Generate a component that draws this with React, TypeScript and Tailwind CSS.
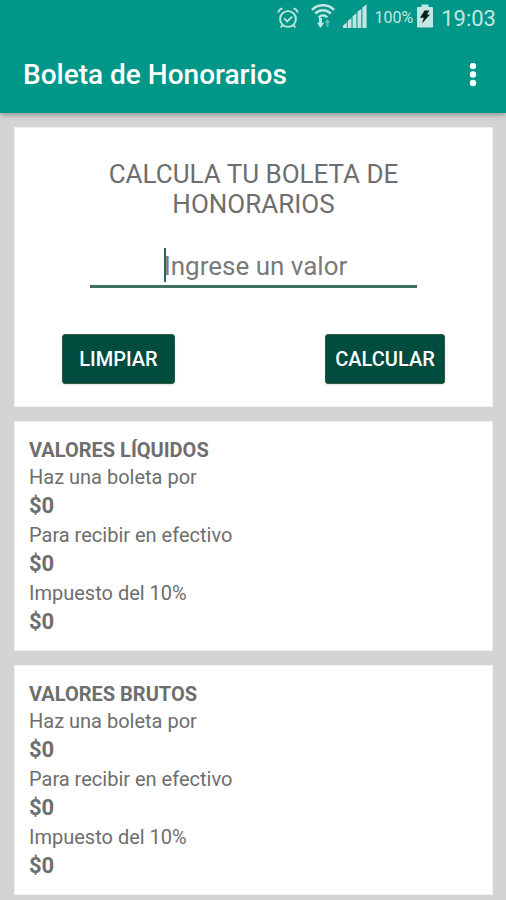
import { useState } from "react";

const TAX_RATE = 0.1;

interface Totals {
  boleta: number;
  efectivo: number;
  impuesto: number;
}

const EMPTY: Totals = { boleta: 0, efectivo: 0, impuesto: 0 };

function money(value: number) {
  return `$${Math.round(value)}`;
}

function AlarmIcon() {
  return (
    <svg width="22" height="22" viewBox="0 0 22 22" fill="none" stroke="currentColor" strokeWidth="1.9">
      <circle cx="11" cy="12" r="7.9" />
      <path d="M7.2 11.4l3 3 5-4.8" />
      <path d="M1.3 5.6C1.6 3.4 3.2 1.900 5.600 1.400M20.700 5.600c-.3-2.200-1.900-3.700-4.300-4.200M5.400 18l-1.600 2.600M16.600 18l1.600 2.600" />
    </svg>
  );
}

function WifiIcon() {
  return (
    <svg width="24" height="24" viewBox="0 0 24 24" fill="none" stroke="currentColor" strokeWidth="2.500">
      <path d="M.9 6C6.800-.3 17.200-.3 23.100 6M4.300 9.700c4.300-4.500 11.100-4.500 15.400 0M7.700 13.300c2.500-2.400 6.100-2.400 8.600 0" />
      <path d="M9.500 14v6.500" strokeWidth="3" />
      <path d="M5.800 18.800h7.400L9.500 24z" fill="currentColor" stroke="none" />
      <path d="M16.500 23v-5" strokeWidth="2" opacity="0.5" />
      <path d="M13.900 18.600h5.200L16.500 15z" fill="currentColor" stroke="none" opacity="0.5" />
    </svg>
  );
}

function SignalIcon() {
  return (
    <svg width="24" height="24" viewBox="0 0 24 24" fill="currentColor">
      <path d="M0 24v-2.500l3.800-3V24zM4.700 24v-7l3.800-3v10zM9.600 24V12.300l3.800-3V24zM14.500 24V7.800l3.800-2.900V24zM19.400 24V3.600L23.600.2V24z" />
    </svg>
  );
}

function BatteryIcon() {
  return (
    <svg width="16" height="24" viewBox="0 0 16 24">
      <path d="M4.500 0.500h7V3H15a1 1 0 0 1 1 1v18.500a1 1 0 0 1-1 1H1a1 1 0 0 1-1-1V4a1 1 0 0 1 1-1h3.500z" fill="currentColor" />
      <path d="M7.500 6.500h5l-2.500 4h3L5 19.500l1.800-5.800H3z" fill="#06201c" />
    </svg>
  );
}

function StatusBar() {
  return (
    <div className="flex h-9 items-center justify-end pr-[10px] text-[#c2e7e2]">
      <AlarmIcon />
      <span className="mb-1 ml-3"><WifiIcon /></span>
      <span className="mb-1 ml-2"><SignalIcon /></span>
      <span className="ml-2 text-base">100%</span>
      <span className="mb-1 ml-1"><BatteryIcon /></span>
      <span className="ml-2 text-[22px]">19:03</span>
    </div>
  );
}

function ResultCard({ title, totals }: { title: string; totals: Totals }) {
  const rows = [
    { label: "Haz una boleta por", value: totals.boleta },
    { label: "Para recibir en efectivo", value: totals.efectivo },
    { label: "Impuesto del 10%", value: totals.impuesto },
  ];

  return (
    <section className="border border-[#f0f0f0] bg-white px-[14px] pt-[15px] pb-[13px]">
      <h2 className="text-xl leading-[26px] font-bold">{title}</h2>
      <dl>
        {rows.map((row) => (
          <div key={row.label}>
            <dt className="text-xl leading-7">{row.label}</dt>
            <dd className="text-[22px] leading-[30px] font-bold">{money(row.value)}</dd>
          </div>
        ))}
      </dl>
    </section>
  );
}

export default function App() {
  const [amount, setAmount] = useState("");
  const [liquid, setLiquid] = useState<Totals>(EMPTY);
  const [gross, setGross] = useState<Totals>(EMPTY);

  const clear = () => {
    setAmount("");
    setLiquid(EMPTY);
    setGross(EMPTY);
  };

  const calculate = () => {
    const value = Number(amount) || 0;
    const boleta = value / (1 - TAX_RATE);
    setLiquid({ boleta, efectivo: value, impuesto: boleta - value });
    setGross({ boleta: value, efectivo: value * (1 - TAX_RATE), impuesto: value * TAX_RATE });
  };

  const buttonClass =
    "h-[50px] rounded-[3px] border border-[#2f5a3c] bg-[#004d40] text-xl font-medium text-white shadow-sm";

  return (
    <div className="min-h-screen bg-[#d4d4d4] font-['Roboto',sans-serif] text-[#6e6e6e]">
      <header className="relative bg-[#009688] shadow-[0_2px_5px_rgba(0,0,0,0.3)]">
        <StatusBar />
        <div className="flex h-[77px] items-center justify-between pr-[21px] pl-[23px] text-white">
          <h1 className="text-[28px] font-medium">Boleta de Honorarios</h1>
          <button aria-label="Más opciones" className="flex w-6 justify-center">
            <svg width="8" height="24" viewBox="0 0 8 24" fill="currentColor">
              <circle cx="4" cy="3" r="3.200" />
              <circle cx="4" cy="11.500" r="3.200" />
              <circle cx="4" cy="20" r="3.200" />
            </svg>
          </button>
        </div>
      </header>

      <main className="flex flex-col gap-[14px] py-[14px] pr-[13px] pl-[14px]">
        <section className="border border-[#f0f0f0] bg-white pt-[31px] pb-[22px]">
          <div className="mx-[75px] text-center">
            <h2 className="text-[26px] leading-[30px]">CALCULA TU BOLETA DE HONORARIOS</h2>
            <div className="relative mt-[27px]">
              <input
                aria-label="Ingrese un valor"
                inputMode="numeric"
                placeholder="Ingrese un valor"
                value={amount}
                onChange={(e) => setAmount(e.target.value)}
                className="h-[42px] w-full border-b-[3px] border-[#3f7062] pl-1 text-center text-[26px] outline-none placeholder:text-[#7a7a7a]"
              />
              {/* Caret shown while the field is empty */}
              {amount === "" && (
                <span className="absolute top-[2px] left-1/2 -ml-[90px] h-[34px] w-[2px] bg-[#2d6355]" />
              )}
            </div>
          </div>
          <div className="mt-[46px] flex justify-between px-[47px]">
            <button onClick={clear} className={`${buttonClass} w-[113px]`}>LIMPIAR</button>
            <button onClick={calculate} className={`${buttonClass} w-[120px]`}>CALCULAR</button>
          </div>
        </section>

        <ResultCard title="VALORES LÍQUIDOS" totals={liquid} />
        <ResultCard title="VALORES BRUTOS" totals={gross} />
      </main>
    </div>
  );
}
